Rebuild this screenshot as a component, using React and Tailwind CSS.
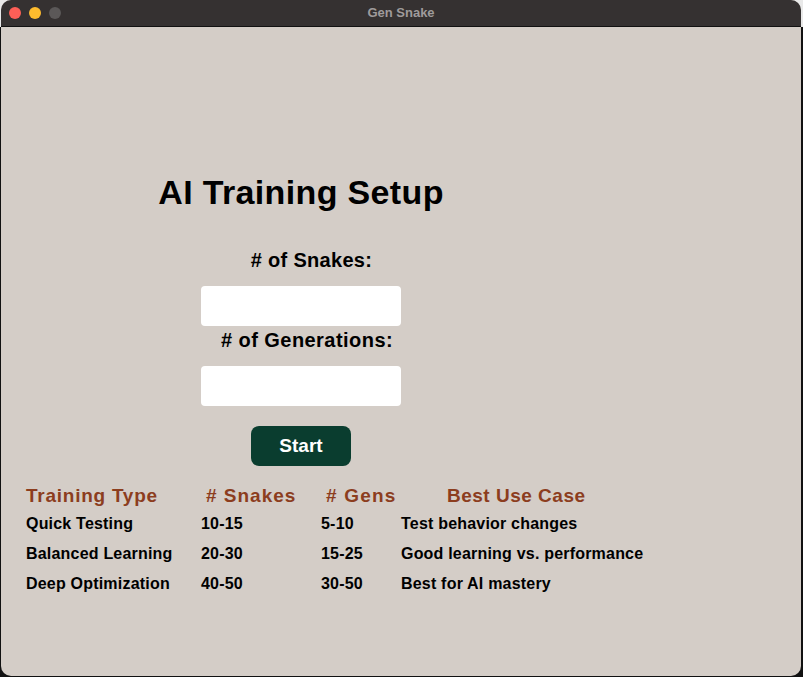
import React from "react";

const rows = [
  { type: "Quick Testing", snakes: "10-15", gens: "5-10", use: "Test behavior changes" },
  { type: "Balanced Learning", snakes: "20-30", gens: "15-25", use: "Good learning vs. performance" },
  { type: "Deep Optimization", snakes: "40-50", gens: "30-50", use: "Best for AI mastery" },
];

export default function App() {
  return (
    <div
      className="w-[803px] h-[677px] overflow-hidden bg-[linear-gradient(to_bottom,#e9e9e9_0px,#e9e9e9_27px,#111111_27px)]"
      style={{ fontFamily: '"Liberation Sans", Arial, sans-serif' }}
    >
      <div className="ml-px w-[800px] h-[676px] rounded-[10px] overflow-hidden bg-[#d4cdc7] flex flex-col">
        {/* Title bar */}
        <div className="relative h-[27px] shrink-0 bg-[#353131] border-b border-[#111111] flex items-center">
          <div className="flex gap-2 ml-2 -mt-px">
            <span className="w-3 h-3 rounded-full bg-[#fe5f57]" />
            <span className="w-3 h-3 rounded-full bg-[#febc2e]" />
            <span className="w-3 h-3 rounded-full bg-[#5b5858]" />
          </div>
          <div className="absolute inset-0 flex items-center justify-center text-[13px] font-bold text-[#9f9b9b] -mt-px">
            Gen Snake
          </div>
        </div>

        {/* Content */}
        <div className="flex-1 pt-[145px]">
          <div className="w-[600px] flex flex-col items-center">
            <h1 className="h-[40px] leading-[40px] text-[34px] font-bold text-black tracking-[0.35px]">
              AI Training Setup
            </h1>
            <div className="mt-[34px] h-[28px] leading-[28px] text-[20px] font-bold text-black pl-[21px] tracking-[0.3px]">
              # of Snakes:
            </div>
            <input className="mt-3 w-[200px] h-[40px] rounded-[4px] bg-white outline-none px-2" />
            <div className="h-[28px] leading-[28px] text-[20px] font-bold text-black pl-[12px] tracking-[0.45px]">
              # of Generations:
            </div>
            <input className="mt-3 w-[200px] h-[40px] rounded-[4px] bg-white outline-none px-2" />
            <button className="mt-5 w-[100px] h-[40px] rounded-[8px] bg-[#0a3d2f] text-white text-[19px] font-bold">
              Start
            </button>
          </div>

          {/* Table */}
          <div className="mt-4 pl-[25px] grid grid-cols-[175px_120px_80px_300px] text-black">
            <div className="h-[27px] leading-[27px] text-[19px] font-bold text-[#8c3d1e] tracking-[0.75px]">Training Type</div>
            <div className="h-[27px] leading-[27px] text-[19px] font-bold text-[#8c3d1e] tracking-[1px] pl-[5px]"># Snakes</div>
            <div className="h-[27px] leading-[27px] text-[19px] font-bold text-[#8c3d1e] tracking-[1.2px] pl-[5px]"># Gens</div>
            <div className="h-[27px] leading-[27px] text-[19px] font-bold text-[#8c3d1e] tracking-[0.5px] pl-[46px]">Best Use Case</div>
            {rows.map((r) => (
              <React.Fragment key={r.type}>
                <div className="h-[30px] leading-[30px] text-[16px] font-bold tracking-[0.2px]">{r.type}</div>
                <div className="h-[30px] leading-[30px] text-[16px] font-bold tracking-[0.2px]">{r.snakes}</div>
                <div className="h-[30px] leading-[30px] text-[16px] font-bold tracking-[0.2px]">{r.gens}</div>
                <div className="h-[30px] leading-[30px] text-[16px] font-bold tracking-[0.2px]">{r.use}</div>
              </React.Fragment>
            ))}
          </div>
        </div>
      </div>
    </div>
  );
}
